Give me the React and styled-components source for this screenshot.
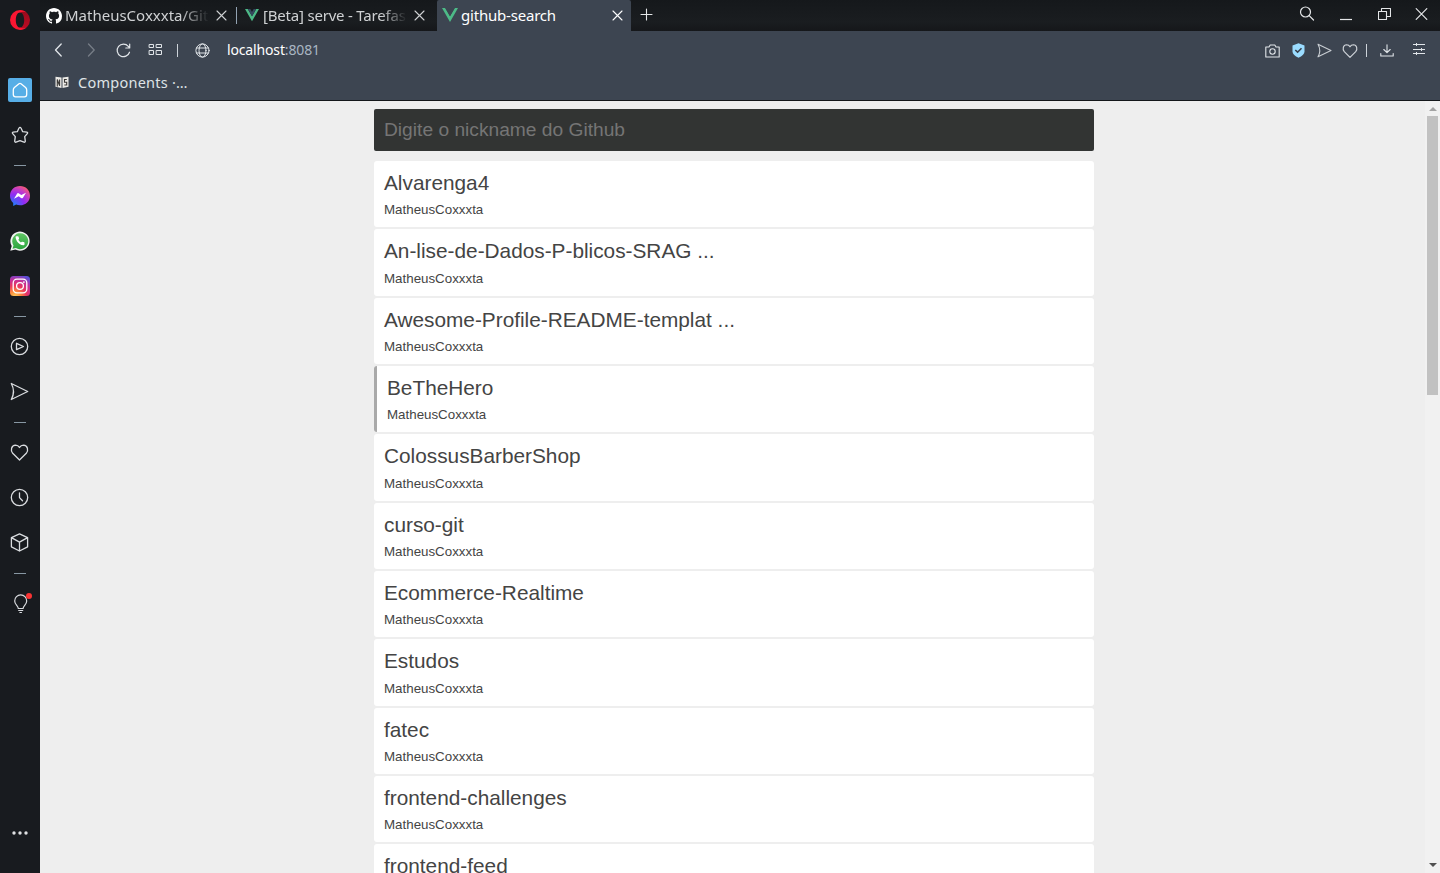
import React from 'react';
import styled, { createGlobalStyle, css } from 'styled-components';

const GlobalStyle = createGlobalStyle`
  * { box-sizing: border-box; }
  html, body { margin: 0; padding: 0; height: 100%; overflow: hidden; }
  body { font-family: "Liberation Sans", Arial, sans-serif; background: #181b1f; }
`;

const uiFont = css`
  font-family: "Noto Sans", "Open Sans", sans-serif;
  white-space: nowrap;
`;

const Window = styled.div`
  display: flex;
  width: 1440px;
  height: 873px;
  overflow: hidden;
`;

const Sidebar = styled.nav`
  display: flex;
  flex-direction: column;
  align-items: center;
  flex: 0 0 40px;
  background: #181b1f;
  color: #d9dcdf;
`;

const SideItem = styled.div`
  display: flex;
  align-items: center;
  justify-content: center;
  width: 40px;
  height: ${(p) => p.$height || 45}px;
  padding-right: ${(p) => (p.$outlined ? 1 : 0)}px;
  svg { display: block; }
`;

const SideDivider = styled.div`
  width: 12px;
  height: 1px;
  margin: 8px 0 7px;
  background: #8797a3;
`;

const SideSpacer = styled.div`
  flex: 1;
`;

const HomeTile = styled.div`
  display: flex;
  align-items: center;
  justify-content: center;
  width: 24px;
  height: 24px;
  border-radius: 2px;
  background: #57aee6;
  color: #fff;
`;

const Main = styled.div`
  display: flex;
  flex-direction: column;
  flex: 1;
  min-width: 0;
`;

const TabBar = styled.header`
  display: flex;
  flex: 0 0 31px;
  background: linear-gradient(#15181b, #1a1d20 70%, #15171a);
  color: #e4e6e8;
`;

const Tab = styled.div`
  display: flex;
  align-items: center;
  width: ${(p) => p.$width}px;
  height: 31px;
  padding-left: ${(p) => p.$pad}px;
  background: ${(p) => (p.$active ? '#3d4551' : 'transparent')};
  color: ${(p) => (p.$active ? '#fff' : '#cfd1d3')};
  border-radius: ${(p) => (p.$active ? '2px 2px 0 0' : '0')};
  svg { flex: none; display: block; }
`;

const TabTitle = styled.span`
  ${uiFont}
  overflow: hidden;
  width: ${(p) => p.$width}px;
  margin-left: ${(p) => p.$gap}px;
  padding-bottom: 2px;
  font-size: 15px;
  line-height: 28px;
  letter-spacing: ${(p) => p.$spacing || 0}px;
  ${(p) =>
    p.$fade &&
    css`
      mask-image: linear-gradient(to right, #000 ${p.$fade}%, transparent 100%);
    `}
`;

const TabDivider = styled.div`
  flex: none;
  width: 1px;
  height: 17px;
  margin-top: 7px;
  background: #93a3b3;
`;

const WindowControls = styled.div`
  display: flex;
  height: 28px;
  padding-right: 12px;
`;

const Glyph = styled.span`
  display: flex;
  flex: none;
  align-items: center;
  justify-content: center;
  width: ${(p) => p.$width}px;
  margin-left: ${(p) => p.$gap || 0}px;
  padding-top: ${(p) => p.$drop || 0}px;
  padding-bottom: ${(p) => p.$lift || 0}px;
  opacity: ${(p) => p.$opacity || 1};
  svg { display: block; }
`;

const Grow = styled.div`
  flex: 1;
`;

const AddressBar = styled.div`
  display: flex;
  align-items: center;
  flex: 0 0 38px;
  padding: 0 14px 0 12px;
  background: #3d4551;
  color: #e1e5e9;
`;

const BarDivider = styled.div`
  flex: none;
  width: 1px;
  height: 13px;
  margin-left: ${(p) => p.$gap}px;
  background: #cdd3d9;
`;

const Address = styled.span`
  ${uiFont}
  margin-left: 17px;
  font-size: 14px;
  line-height: 38px;
  letter-spacing: -0.15px;
  color: #fff;
`;

const Port = styled.span`
  color: #a9b6c3;
`;

const Bookmarks = styled.div`
  display: flex;
  align-items: center;
  flex: 0 0 32px;
  padding: 0 0 4px 15px;
  background: #3d4551;
  border-bottom: 1px solid #14171a;
  color: #dfe3e6;
`;

const BookmarkName = styled.span`
  ${uiFont}
  margin-left: 9px;
  padding-bottom: 1px;
  font-size: 14.5px;
  line-height: 24px;
  letter-spacing: 0.25px;
`;

const Viewport = styled.div`
  display: flex;
  flex: 1;
  min-height: 0;
  background: #eee;
`;

const Page = styled.main`
  flex: 1;
  overflow: hidden;
  padding: 8px 0 0 334px;
`;

const Container = styled.div`
  width: 720px;
`;

const SearchInput = styled.input`
  display: block;
  width: 100%;
  height: 42px;
  margin: 0 0 10px;
  padding: 0 10px;
  border: 0;
  border-radius: 2px;
  outline: 0;
  background: #323433;
  color: #eee;
  font: 19.2px "Liberation Sans", Arial, sans-serif;
  &::placeholder { color: #757575; opacity: 1; }
`;

const RepoCard = styled.article`
  height: 66.33px;
  margin-bottom: 2px;
  padding: 10px;
  border-radius: 3px;
  border-left: ${(p) => (p.$hover ? '3px solid #a9a9a9' : '0')};
  background: #fff;
  color: #444;
`;

const RepoName = styled.h2`
  margin: 0;
  font-size: 20.8px;
  font-weight: 400;
  line-height: 24px;
`;

const RepoOwner = styled.p`
  margin: 6.4px 0 0;
  font-size: 13.333px;
  line-height: 17px;
`;

const Scrollbar = styled.div`
  display: flex;
  flex-direction: column;
  align-items: center;
  flex: 0 0 15px;
  background: #f1f1f1;
`;

const ScrollArrow = styled.div`
  width: 0;
  height: 0;
  margin: ${(p) => (p.$down ? 'auto 0 6px' : '6px 0 4px')};
  border-left: 4px solid transparent;
  border-right: 4px solid transparent;
  ${(p) => (p.$down ? 'border-top: 4px solid #505050;' : 'border-bottom: 4px solid #a3a3a3;')}
`;

const ScrollThumb = styled.div`
  width: 11px;
  height: 279px;
  margin-top: 1px;
  background: #c1c1c1;
`;

const Line = ({ w, h = w, box, sw = 1.2, children, ...rest }) => (
  <svg width={w} height={h} viewBox={box || `0 0 ${w} ${h}`} fill="none" stroke="currentColor" strokeWidth={sw} strokeLinecap="round" strokeLinejoin="round" {...rest}>
    {children}
  </svg>
);

const OperaLogo = () => (
  <svg width="20" height="20" viewBox="0 0 20 20">
    <defs>
      <linearGradient id="operaR" x1="0" y1="0" x2="0" y2="1">
        <stop offset="0" stopColor="#960a1c" />
        <stop offset="1" stopColor="#c00c24" />
      </linearGradient>
    </defs>
    <path d="M10 0a10 10 0 0 1 0 20zM10 2.400V17.600C12.600 17.600 14.200 14.200 14.200 10S12.600 2.400 10 2.400Z" fillRule="evenodd" fill="url(#operaR)" />
    <path d="M10 0A10 10 0 0 0 10 20C12.500 20 14.800 19 16.600 17.500C14.500 18.600 12 18.300 10 17.600C7.400 17.600 5.800 14.200 5.800 10S7.400 2.400 10 2.400C12 1.700 14.500 1.400 16.600 2.500C14.800 1 12.500 0 10 0Z" fill="#fb1632" />
  </svg>
);

const HomeIcon = () => (
  <Line w={16} sw={1.3}>
    <path d="M7 1.700Q8 .9 9 1.700L13.600 5.500Q14.700 6.500 14.700 8V12.500Q14.700 14.800 12.400 14.800H3.600Q1.300 14.800 1.300 12.500V8Q1.300 6.500 2.400 5.500Z" />
  </Line>
);

const StarIcon = () => (
  <Line w={18} sw={1.3}>
    <path d="M9 1.300Q9.700 1.300 10 2L11.700 5.700 15.900 6.200Q17.200 6.600 16.300 7.600L13.700 10.700 14.300 15.200Q14.200 16.500 13 16.200L9 14.600 5 16.200Q3.800 16.500 3.700 15.200L4.300 10.700 1.700 7.600Q.8 6.600 2.100 6.200L6.300 5.700 8 2Q8.300 1.300 9 1.300Z" />
  </Line>
);

const MessengerIcon = () => (
  <svg width="20" height="20" viewBox="0 0 20 20">
    <defs>
      <radialGradient id="msg" cx=".15" cy="1" r="1.150">
        <stop offset="0" stopColor="#1687fa" />
        <stop offset=".5" stopColor="#8f2cf4" />
        <stop offset=".75" stopColor="#c33bc8" />
        <stop offset="1" stopColor="#fa5f6c" />
      </radialGradient>
    </defs>
    <path d="M10 0C4.300 0 0 4.100 0 9.700c0 2.900 1.200 5.400 3.200 7.200V20l2.900-1.400c1.200.4 2.500.7 3.900.7 5.700 0 10-4.100 10-9.600S15.700 0 10 0z" fill="url(#msg)" />
    <path d="M4 12.800 7 7.700q.8-1.100 2-.3l2.300 1.700L16 6.700l-3 5q-.8 1.100-2 .3L8.700 10.300z" fill="#fff" />
  </svg>
);

const WhatsAppIcon = () => (
  <svg width="20" height="20" viewBox="0 0 20 20">
    <defs>
      <linearGradient id="wa" x1="0" y1="0" x2="0" y2="1">
        <stop offset="0" stopColor="#61c665" />
        <stop offset="1" stopColor="#2ca53e" />
      </linearGradient>
    </defs>
    <path d="M.3 19.800 1.700 15A9.600 9.600 0 1 1 5.300 18.500z" fill="#f1f3f1" />
    <path d="M2.500 17.700 3.500 14.500A8 8 0 1 1 5.900 16.900z" fill="url(#wa)" />
    <path transform="translate(4.600 4.400) scale(.45)" d="M22 16.920v3a2 2 0 0 1-2.180 2 19.790 19.790 0 0 1-8.630-3.070 19.500 19.500 0 0 1-6-6 19.790 19.790 0 0 1-3.070-8.670A2 2 0 0 1 4.110 2h3a2 2 0 0 1 2 1.720 12.840 12.840 0 0 0 .7 2.810 2 2 0 0 1-.45 2.110L8.090 9.910a16 16 0 0 0 6 6l1.270-1.270a2 2 0 0 1 2.110-.45 12.840 12.840 0 0 0 2.810.7A2 2 0 0 1 22 16.920z" fill="#fff" />
  </svg>
);

const InstagramIcon = () => (
  <svg width="20" height="20" viewBox="0 0 20 20">
    <defs>
      <radialGradient id="ig" cx=".25" cy="1.050" r="1.150">
        <stop offset="0" stopColor="#ffd55c" />
        <stop offset=".25" stopColor="#fb8a3c" />
        <stop offset=".5" stopColor="#e9365f" />
        <stop offset=".75" stopColor="#c52f9a" />
        <stop offset="1" stopColor="#5a4fd6" />
      </radialGradient>
    </defs>
    <rect width="20" height="20" rx="3.500" fill="url(#ig)" />
    <rect x="3.200" y="3.200" width="13.600" height="13.600" rx="3.800" fill="none" stroke="#fff" strokeWidth="1.300" />
    <circle cx="10" cy="10" r="3.400" fill="none" stroke="#fff" strokeWidth="1.300" />
    <circle cx="13.900" cy="6.100" r=".9" fill="#fff" />
  </svg>
);

const PlayerIcon = () => (
  <Line w={19} sw={1.300}>
    <circle cx="9.500" cy="9.500" r="8.200" />
    <path d="M6.500 6.300V12.700L13.500 9.500Z" />
  </Line>
);

const SendIcon = ({ size = 19, sw = 1.3 }) => (
  <Line w={size} box="0 0 19 19" sw={sw}>
    <path d="M1.300 1.500 17.700 9.500 1.300 17.500Q5.700 9.500 1.300 1.500Z" />
  </Line>
);

const HeartIcon = ({ size = 19, sw = 1.3 }) => (
  <Line w={size} box="0 0 19 19" sw={sw}>
    <path d="M9.500 17 2.700 10.300C.3 7.500 1.200 2.300 5.500 2.100Q8.200 2.100 9.500 4.500Q10.800 2.100 13.500 2.100C17.800 2.300 18.700 7.500 16.300 10.300Z" />
  </Line>
);

const ClockIcon = () => (
  <Line w={19} sw={1.3}>
    <circle cx="9.500" cy="9.500" r="8.200" />
    <path d="M9.500 4.800V9.600L12.500 12.800" />
  </Line>
);

const CubeIcon = () => (
  <Line w={19} sw={1.3}>
    <path d="M9.500 .8 17.600 4.600V13.800L9.500 18 1.400 13.800V4.600ZM1.400 4.600 9.500 9.100 17.600 4.600M9.500 9.100V18" />
  </Line>
);

const BulbIcon = () => (
  <Line w={25} h={22} sw={1.2}>
    <path d="M10.300 15.500C10.300 12.700 6.700 11.700 6.700 7.900A6 6 0 0 1 18.700 7.900C18.700 11.700 15.100 12.700 15.100 15.500Z" />
    <path d="M10.700 17.500H14.700M11.900 19.500H13.500" />
    <circle cx="21" cy="3" r="3" fill="#fa3434" stroke="none" />
  </Line>
);

const DotsIcon = () => (
  <svg width="18" height="4" viewBox="0 0 18 4" fill="#dfe1e3">
    <circle cx="3" cy="2" r="1.700" />
    <circle cx="9" cy="2" r="1.700" />
    <circle cx="15" cy="2" r="1.700" />
  </svg>
);

const GithubMark = () => (
  <svg width="16" height="16" viewBox="0 0 16 16" fill="#fff">
    <path d="M8 0C3.580 0 0 3.580 0 8c0 3.540 2.290 6.530 5.470 7.590.4.070.55-.17.55-.38 0-.19-.01-.82-.01-1.490-2.010.37-2.530-.49-2.690-.94-.09-.23-.48-.94-.82-1.130-.28-.15-.68-.52-.01-.53.63-.01 1.080.58 1.230.82.72 1.210 1.870.87 2.330.66.070-.52.28-.87.510-1.070-1.780-.2-3.640-.89-3.640-3.950 0-.87.310-1.590.82-2.150-.08-.2-.36-1.020.08-2.120 0 0 .67-.21 2.200.82.64-.18 1.320-.27 2-.27.68 0 1.360.09 2 .27 1.530-1.040 2.200-.82 2.200-.82.440 1.100.16 1.920.08 2.120.51.56.82 1.270.82 2.150 0 3.070-1.870 3.750-3.650 3.950.29.25.54.73.54 1.480 0 1.070-.01 1.930-.01 2.200 0 .21.15.46.55.38A8.013 8.013 0 0 0 16 8c0-4.420-3.580-8-8-8z" />
  </svg>
);

const VueLogo = ({ dark = '#35495e', w = 14 }) => (
  <svg width={w} height={w * 0.88} viewBox="0 0 16 14">
    <path d="M0 0H3.200L8 8.300 12.800 0H16L8 14Z" fill="#4dba87" />
    <path d="M3.200 0H6.100L8 3.300 9.900 0H12.800L8 8.300Z" fill={dark} />
  </svg>
);

const CloseIcon = ({ size = 11, sw = 1.1 }) => (
  <Line w={size} box="0 0 11 11" sw={sw}>
    <path d="M1 1 10 10M10 1 1 10" />
  </Line>
);

const sidebarGroups = [
  [
    { Icon: MessengerIcon },
    { Icon: WhatsAppIcon },
    { Icon: InstagramIcon },
  ],
  [
    { Icon: PlayerIcon, outlined: true },
    { Icon: SendIcon, outlined: true },
  ],
  [
    { Icon: HeartIcon, outlined: true },
    { Icon: ClockIcon, outlined: true },
    { Icon: CubeIcon, outlined: true },
  ],
  [{ Icon: BulbIcon }],
];

const repositories = [
  'Alvarenga4',
  'An-lise-de-Dados-P-blicos-SRAG ...',
  'Awesome-Profile-README-templat ...',
  'BeTheHero',
  'ColossusBarberShop',
  'curso-git',
  'Ecommerce-Realtime',
  'Estudos',
  'fatec',
  'frontend-challenges',
  'frontend-feed',
];

const BrowserSidebar = () => (
  <Sidebar>
    <SideItem $height={40}><OperaLogo /></SideItem>
    <SideItem $height={27} />
    <SideItem><HomeTile><HomeIcon /></HomeTile></SideItem>
    <SideItem><StarIcon /></SideItem>
    {sidebarGroups.map((group, i) => (
      <React.Fragment key={i}>
        <SideDivider />
        {group.map(({ Icon, outlined }, j) => (
          <SideItem key={j} $outlined={outlined}><Icon /></SideItem>
        ))}
      </React.Fragment>
    ))}
    <SideSpacer />
    <SideItem $height={80}><DotsIcon /></SideItem>
  </Sidebar>
);

const BrowserTabs = () => (
  <TabBar>
    <Tab $width={196} $pad={6}>
      <GithubMark />
      <TabTitle $width={144} $gap={3} $fade={80}>MatheusCoxxxta/Gith</TabTitle>
      <Glyph $width={11} $gap={7}><CloseIcon /></Glyph>
    </Tab>
    <TabDivider />
    <Tab $width={200} $pad={8}>
      <VueLogo />
      <TabTitle $width={144} $gap={4} $fade={82} $spacing={-0.2}>[Beta] serve - Tarefas</TabTitle>
      <Glyph $width={11} $gap={7}><CloseIcon /></Glyph>
    </Tab>
    <Tab $width={194} $pad={5} $active>
      <VueLogo w={16} dark="#3d4551" />
      <TabTitle $width={147} $gap={3} $spacing={-0.2}>github-search</TabTitle>
      <Glyph $width={11} $gap={4}><CloseIcon /></Glyph>
    </Tab>
    <Glyph $width={13} $gap={9} $lift={2}>
      <Line w={13} sw={1.1}><path d="M6.500 1V12M1 6.500H12" /></Line>
    </Glyph>
    <Grow />
    <WindowControls>
      <Glyph $width={16}>
        <Line w={16} sw={1.2}><circle cx="6.500" cy="6" r="5" /><path d="M10.200 9.700 14.500 14" /></Line>
      </Glyph>
      <Glyph $width={12} $gap={25}>
        <Line w={12} h={14} strokeLinecap="butt"><path d="M0 12.500H12" /></Line>
      </Glyph>
      <Glyph $width={13} $gap={26}>
        <Line w={13} h={14} sw={1.1}><path d="M.5 4.500H8.500V12.500H.5ZM3.500 4.500V1.500H12.500V9.500H8.500" /></Line>
      </Glyph>
      <Glyph $width={13} $gap={24}><CloseIcon size={14} sw={1} /></Glyph>
    </WindowControls>
  </TabBar>
);

const BrowserAddress = () => (
  <AddressBar>
    <Glyph $width={13} $lift={1}><Line w={9} h={14} sw={1.3}><path d="M7.200 1 1.500 7 7.200 13" /></Line></Glyph>
    <Glyph $width={13} $gap={20} $opacity={0.35} $lift={1}><Line w={9} h={14} sw={1.3}><path d="M1.500 1 7.200 7 1.500 13" /></Line></Glyph>
    <Glyph $width={15} $gap={18}>
      <Line w={15} sw={1.2}><path d="M13.500 9.200A6.300 6.300 0 1 1 12.300 3.300L13.700 4.900M13.700 1V5H9.800" /></Line>
    </Glyph>
    <Glyph $width={14} $gap={17} $lift={2}>
      <Line w={14} h={12} sw={1}>
        <path d="M1.500 1.500H5.500V4.500H1.500ZM8.500 1.500H13.500V4.500H8.500ZM1.500 7.500H5.500V11.500H1.500ZM8.500 7.500H13.500V11.500H8.500Z" />
      </Line>
    </Glyph>
    <BarDivider $gap={15} />
    <Glyph $width={15} $gap={17} $drop={1}>
      <Line w={15} sw={1}>
        <circle cx="7.500" cy="7.500" r="6.600" />
        <ellipse cx="7.500" cy="7.500" rx="3.500" ry="6.600" />
        <path d="M1.600 5H13.400M1.600 10H13.400" />
      </Line>
    </Glyph>
    <Address>localhost<Port>:8081</Port></Address>
    <Grow />
    <Glyph $width={15} $drop={1}>
      <Line w={15} h={14} sw={1.1}>
        <path d="M.8 3H4L5.200 1H9.800L11 3H14.200V13H.8Z" />
        <circle cx="7.500" cy="7.500" r="2.700" />
      </Line>
    </Glyph>
    <Glyph $width={13} $gap={12} $drop={1}>
      <svg width="13" height="15" viewBox="0 0 13 15">
        <path d="M6.500 .3 12.500 2.500V8.800Q12 12.500 6.500 14.700 1 12.500 .5 8.800V2.500Z" fill="#9bdcff" />
        <path d="M3.300 7 5.600 9.200 9.500 5.300" fill="none" stroke="#37414d" strokeWidth="1.600" />
      </svg>
    </Glyph>
    <Glyph $width={15} $gap={12} $opacity={0.85} $drop={1}><SendIcon size={15} sw={1.4} /></Glyph>
    <Glyph $width={16} $gap={10} $opacity={0.9} $drop={1}><HeartIcon size={16} sw={1.4} /></Glyph>
    <BarDivider $gap={8} />
    <Glyph $width={14} $gap={13}>
      <Line w={14} h={13} sw={1.1}><path d="M7 .7V8.500M3.800 5.500 7 8.700 10.200 5.500M.8 9.500V12H13.200V9.500" /></Line>
    </Glyph>
    <Glyph $width={13} $gap={19} $lift={2}>
      <Line w={13} h={12} sw={1} strokeLinecap="butt">
        <path d="M0 1.500H12M0 6.500H12M0 10.500H12M3.500 0V3M8.500 5V8M3.500 9V12" />
      </Line>
    </Glyph>
  </AddressBar>
);

const BrowserBookmarks = () => (
  <Bookmarks>
    <svg width="14" height="13" viewBox="0 0 14 13">
      <path d="M.5 .8 6.500 1.500V12L.5 10.800ZM7.500 1.500 13.500 .8V10.800L7.500 12Z" fill="#eceae6" />
      <path d="M2.300 10.500V3.500L4.600 9.800V3.500M11.800 3.500H9.500V6.200H11.700V9H9.300" fill="none" stroke="#3b3937" strokeWidth="1.100" />
    </svg>
    <BookmarkName>Components ·…</BookmarkName>
  </Bookmarks>
);

export default function App() {
  return (
    <>
      <GlobalStyle />
      <Window>
        <BrowserSidebar />
        <Main>
          <BrowserTabs />
          <BrowserAddress />
          <BrowserBookmarks />
          <Viewport>
            <Page>
              <Container>
                <SearchInput placeholder="Digite o nickname do Github" />
                {repositories.map((name) => (
                  <RepoCard key={name} $hover={name === 'BeTheHero'}>
                    <RepoName>{name}</RepoName>
                    <RepoOwner>MatheusCoxxxta</RepoOwner>
                  </RepoCard>
                ))}
              </Container>
            </Page>
            <Scrollbar>
              <ScrollArrow />
              <ScrollThumb />
              <ScrollArrow $down />
            </Scrollbar>
          </Viewport>
        </Main>
      </Window>
    </>
  );
}
